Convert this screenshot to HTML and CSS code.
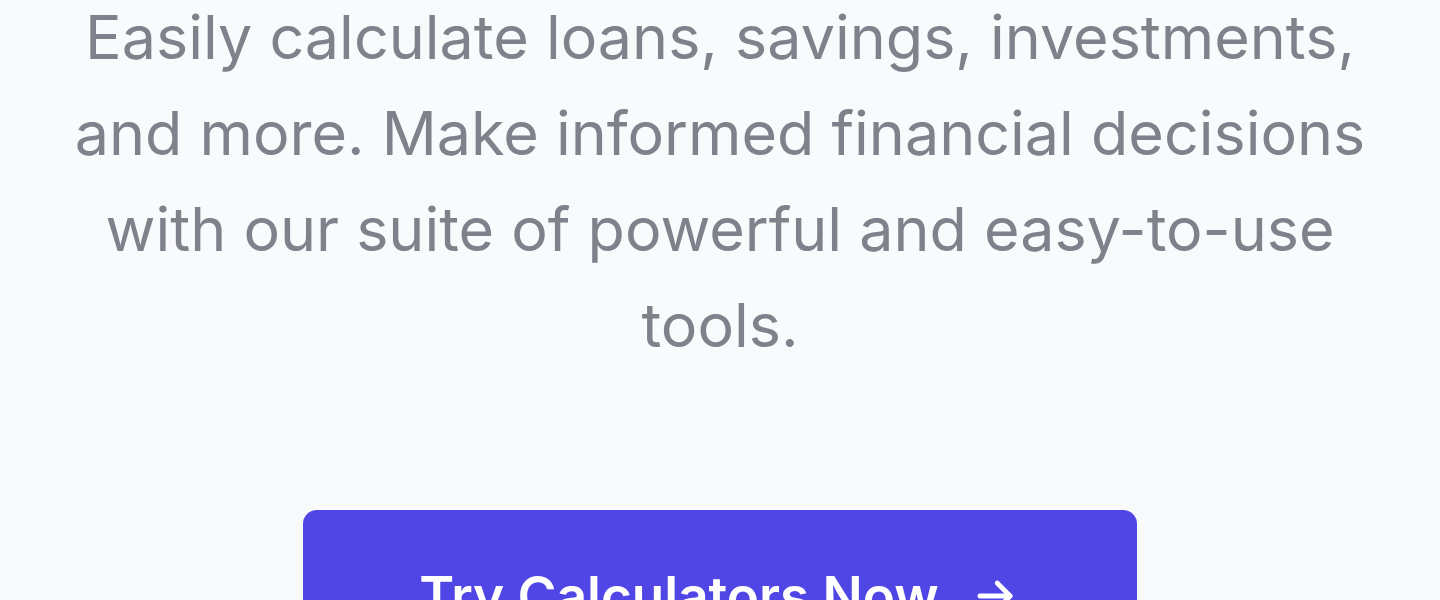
FILE: index.html
```html
<!DOCTYPE html>
<html lang="en">
<head>
<meta charset="utf-8">
<title>Financial Calculators</title>
<link rel="stylesheet" href="styles.css">
</head>
<body>
  <section class="hero">
    <p class="hero-lead">Easily calculate loans, savings, investments, and more. Make informed financial decisions with our suite of powerful and easy-to-use tools.</p>
    <div class="hero-actions">
      <a class="btn-primary" href="#calculators">
        <span>Try Calculators Now</span>
        <svg class="btn-icon" viewBox="0 0 24 24" fill="none" stroke="currentColor" stroke-width="2.2" stroke-linecap="round" stroke-linejoin="round" aria-hidden="true">
          <path d="M5 12h14"/>
          <path d="M13 6l6 6-6 6"/>
        </svg>
      </a>
    </div>
  </section>
</body>
</html>
```

FILE: styles.css
```css
html, body {
  margin: 0;
  padding: 0;
}

body {
  background: #f9fafb;
  font-family: Inter, "Noto Sans", "Liberation Sans", sans-serif;
  overflow: hidden;
}

.hero {
  display: flex;
  flex-direction: column;
  align-items: center;
  text-align: center;
}

.hero-lead {
  margin: -11px 0 0;
  max-width: 1320px;
  font-size: 61px;
  line-height: 96px;
  color: #7d828b;
}

.hero-actions {
  margin-top: 137px;
  display: flex;
  justify-content: center;
}

.btn-primary {
  display: inline-flex;
  align-items: center;
  gap: 30px;
  box-sizing: border-box;
  width: 834px;
  justify-content: center;
  padding: 54px 0;
  background: #4f46e5;
  color: #ffffff;
  border-radius: 14px;
  font-size: 53px;
  font-weight: 600;
  line-height: 64px;
  text-decoration: none;
}

.btn-icon {
  width: 52px;
  height: 52px;
}
```
